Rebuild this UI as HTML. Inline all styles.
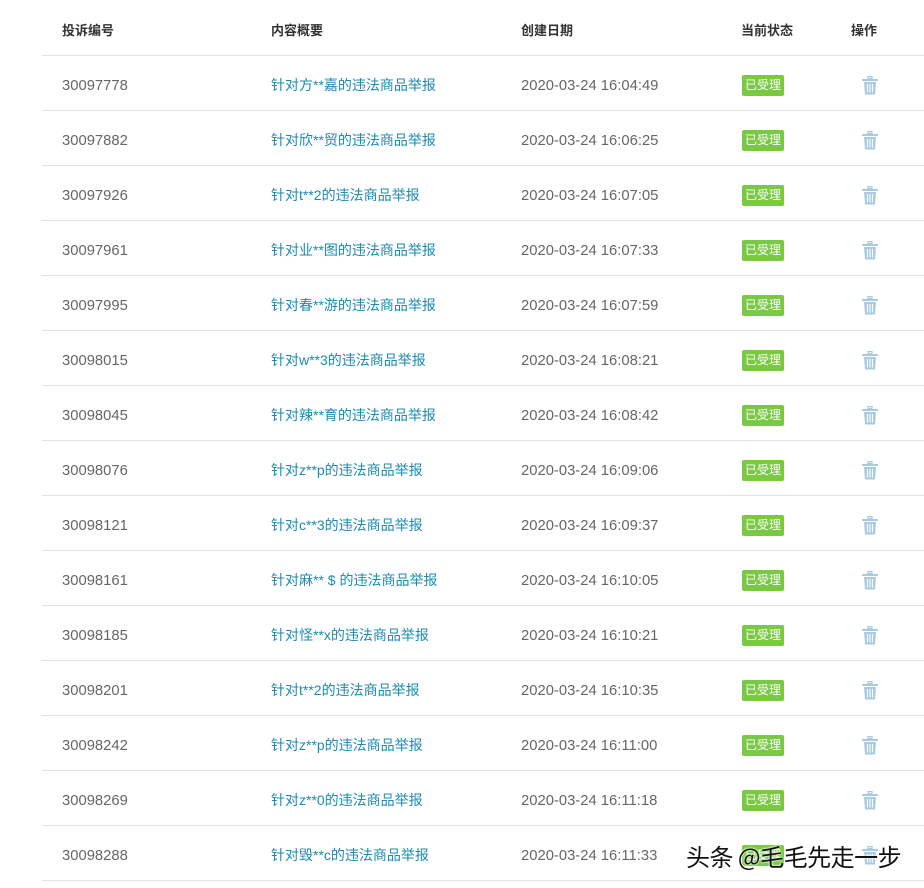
<!DOCTYPE html>
<html><head><meta charset="utf-8"><style>
body{margin:0;width:924px;height:888px;background:#fff;position:relative;overflow:hidden;font-family:"Liberation Sans","Noto Sans CJK SC",sans-serif;}
.h{position:absolute;top:20px;font-size:13px;font-weight:bold;color:#333;}
.line{position:absolute;left:42px;right:0;height:1px;background:#e2e2e2;}
.row{position:absolute;left:0;width:924px;height:55px;}
.row span{position:absolute;}
.id{left:62px;top:23px;font-size:14.8px;color:#666;}
.t{left:271px;top:20px;font-size:14px;color:#1b8bb0;}
.d{left:521px;top:23px;font-size:14.8px;color:#666;}
.b{position:absolute;left:742px;top:20px;width:42px;height:21px;background:#7ac943;color:#fff;font-size:12px;line-height:21px;text-align:center;border-radius:2px;}
.ic{position:absolute;left:862px;top:21px;}
.wm{position:absolute;left:686px;top:838px;font-size:24px;color:#111;font-family:"Noto Sans CJK SC",sans-serif;letter-spacing:-0.5px;text-shadow:0 0 2px #fff,0 0 2px #fff;}
</style></head><body>
<div class="h" style="left:62px">投诉编号</div>
<div class="h" style="left:271px">内容概要</div>
<div class="h" style="left:521px">创建日期</div>
<div class="h" style="left:741px">当前状态</div>
<div class="h" style="left:851px">操作</div>
<div class="line" style="top:55px"></div>
<div id="rows"></div>
<script>
var d=[["30097778","针对方**嘉的违法商品举报","16:04:49"],["30097882","针对欣**贸的违法商品举报","16:06:25"],["30097926","针对t**2的违法商品举报","16:07:05"],["30097961","针对业**图的违法商品举报","16:07:33"],["30097995","针对春**游的违法商品举报","16:07:59"],["30098015","针对w**3的违法商品举报","16:08:21"],["30098045","针对辣**育的违法商品举报","16:08:42"],["30098076","针对z**p的违法商品举报","16:09:06"],["30098121","针对c**3的违法商品举报","16:09:37"],["30098161","针对麻** $ 的违法商品举报","16:10:05"],["30098185","针对怪**x的违法商品举报","16:10:21"],["30098201","针对t**2的违法商品举报","16:10:35"],["30098242","针对z**p的违法商品举报","16:11:00"],["30098269","针对z**0的违法商品举报","16:11:18"],["30098288","针对毁**c的违法商品举报","16:11:33"]];
var ic='<svg class="ic" width="16" height="19" viewBox="0 0 16 19"><rect x="6" y="0.5" width="4" height="2" fill="none" stroke="#a9cbe0" stroke-width="1.2"/><rect x="0" y="3" width="16" height="2" fill="#a9cbe0"/><path d="M2 6h12l-1 12.5H3z" fill="#a9cbe0"/><path d="M5.5 8v8.5M8 8v8.5M10.5 8v8.5" stroke="#fff" stroke-width="1.1"/></svg>';
var h='';
d.forEach(function(r,i){var top=55+i*55;
h+='<div class="row" style="top:'+top+'px"><span class="id">'+r[0]+'</span><span class="t">'+r[1]+'</span><span class="d">2020-03-24 '+r[2]+'</span><div class="b">已受理</div>'+ic+'</div><div class="line" style="top:'+(top+55)+'px"></div>';});
document.getElementById('rows').innerHTML=h;
</script>
<div class="wm">头条 @毛毛先走一步</div>
</body></html>
